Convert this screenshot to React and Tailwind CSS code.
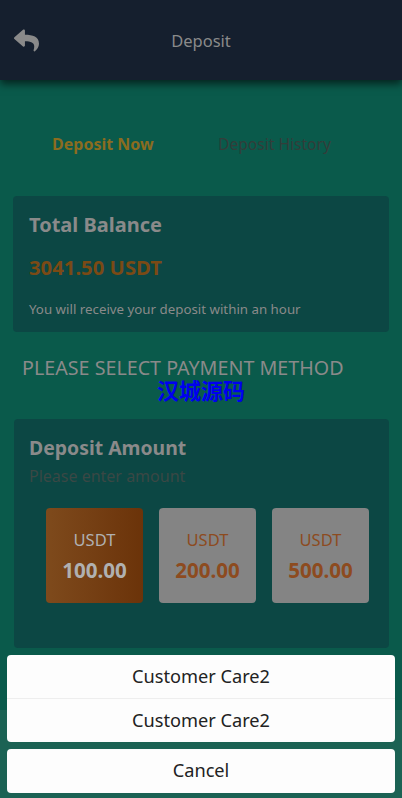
import React from "react";
import { FaReply } from "react-icons/fa";

const amounts = ["100.00", "200.00", "500.00"];

export default function App() {
  return (
    <div
      className="relative min-h-[798px] bg-[#1b6254] overflow-hidden"
      style={{ fontFamily: '"Noto Sans", "Noto Sans CJK SC", sans-serif' }}
    >
      <div className="h-[710px] bg-[#0a5a4b]">
        {/* HEADER */}
        <div className="relative h-[80px] bg-[#151f2e] flex items-center justify-center shadow-[0_4px_8px_rgba(0,0,0,0.6)]">
          <FaReply className="absolute left-[14px] top-[28px] text-[#8a8a8a]" size={25} />
          <span className="text-[16.5px] text-[#8a8a8a] leading-[24px] pt-[2px]">Deposit</span>
        </div>

        {/* TABS */}
        <div className="flex pt-[52px] pb-[40px] pl-[52px] text-[16px] leading-[24px]">
          <span className="font-bold text-[#8b6c1f] w-[166px]">Deposit Now</span>
          <span className="text-[15.6px] text-[#333d3a]">Deposit History</span>
        </div>

        <div className="px-[13px]">
          {/* BALANCE */}
          <div className="bg-[#0c4744] rounded-[4px] px-[16px] pt-[15px] h-[136px]">
            <div className="text-[20px] font-bold text-[#8a8a8a] leading-[28px]">Total Balance</div>
            <div className="mt-[14px] text-[20.3px] font-bold text-[#7b4a15] leading-[28px]">3041.50 USDT</div>
            <div className="mt-[18px] text-[13.3px] text-[#8a8a8a] leading-[20px]">
              You will receive your deposit within an hour
            </div>
          </div>

          <div className="pl-[9px] mt-[25px] text-[19.7px] text-[#8a8a8a] leading-[21px]">
            PLEASE SELECT PAYMENT METHOD
          </div>
          <div className="mt-[2px] text-center text-[22px] font-bold text-[#0000f0] leading-[20px]">汉城源码</div>

          {/* AMOUNT */}
          <div className="mt-[19px] ml-[1px] bg-[#0c4744] rounded-[4px] h-[229px] px-[15px] pt-[16px]">
            <div className="text-[19.4px] font-bold text-[#8a8a8a] leading-[26px]">Deposit Amount</div>
            <div className="mt-[2px] text-[16px] text-[#3a4845] leading-[26px]">Please enter amount</div>
            <div className="mt-[19px] flex gap-[16px] pl-[17px]">
              {amounts.map((a, i) => (
                <div
                  key={a}
                  className={
                    i === 0
                      ? "w-[97px] h-[95px] rounded-[4px] bg-gradient-to-r from-[#7e4a1c] to-[#6b3309] flex flex-col items-center justify-center text-[#b0b0b0]"
                      : "w-[97px] h-[95px] rounded-[4px] bg-[#848484] flex flex-col items-center justify-center text-[#8d4b1f]"
                  }
                >
                  <span className="text-[16.5px] leading-[20px]">USDT</span>
                  <span className="mt-[8px] text-[20.6px] font-bold leading-[24px]">{a}</span>
                </div>
              ))}
            </div>
          </div>
        </div>
      </div>

      {/* ACTION SHEET */}
      <div className="absolute left-[7px] right-[7px] bottom-[5px] flex flex-col gap-[7px] text-[18.2px] text-[#222]">
        <div className="bg-[#fdfdfd] rounded-[4px] overflow-hidden">
          <div className="h-[44px] flex items-center justify-center border-b border-[#eeeeee]">Customer Care2</div>
          <div className="h-[43px] flex items-center justify-center">Customer Care2</div>
        </div>
        <div className="bg-[#fdfdfd] rounded-[4px] h-[44px] flex items-center justify-center">Cancel</div>
      </div>
    </div>
  );
}
